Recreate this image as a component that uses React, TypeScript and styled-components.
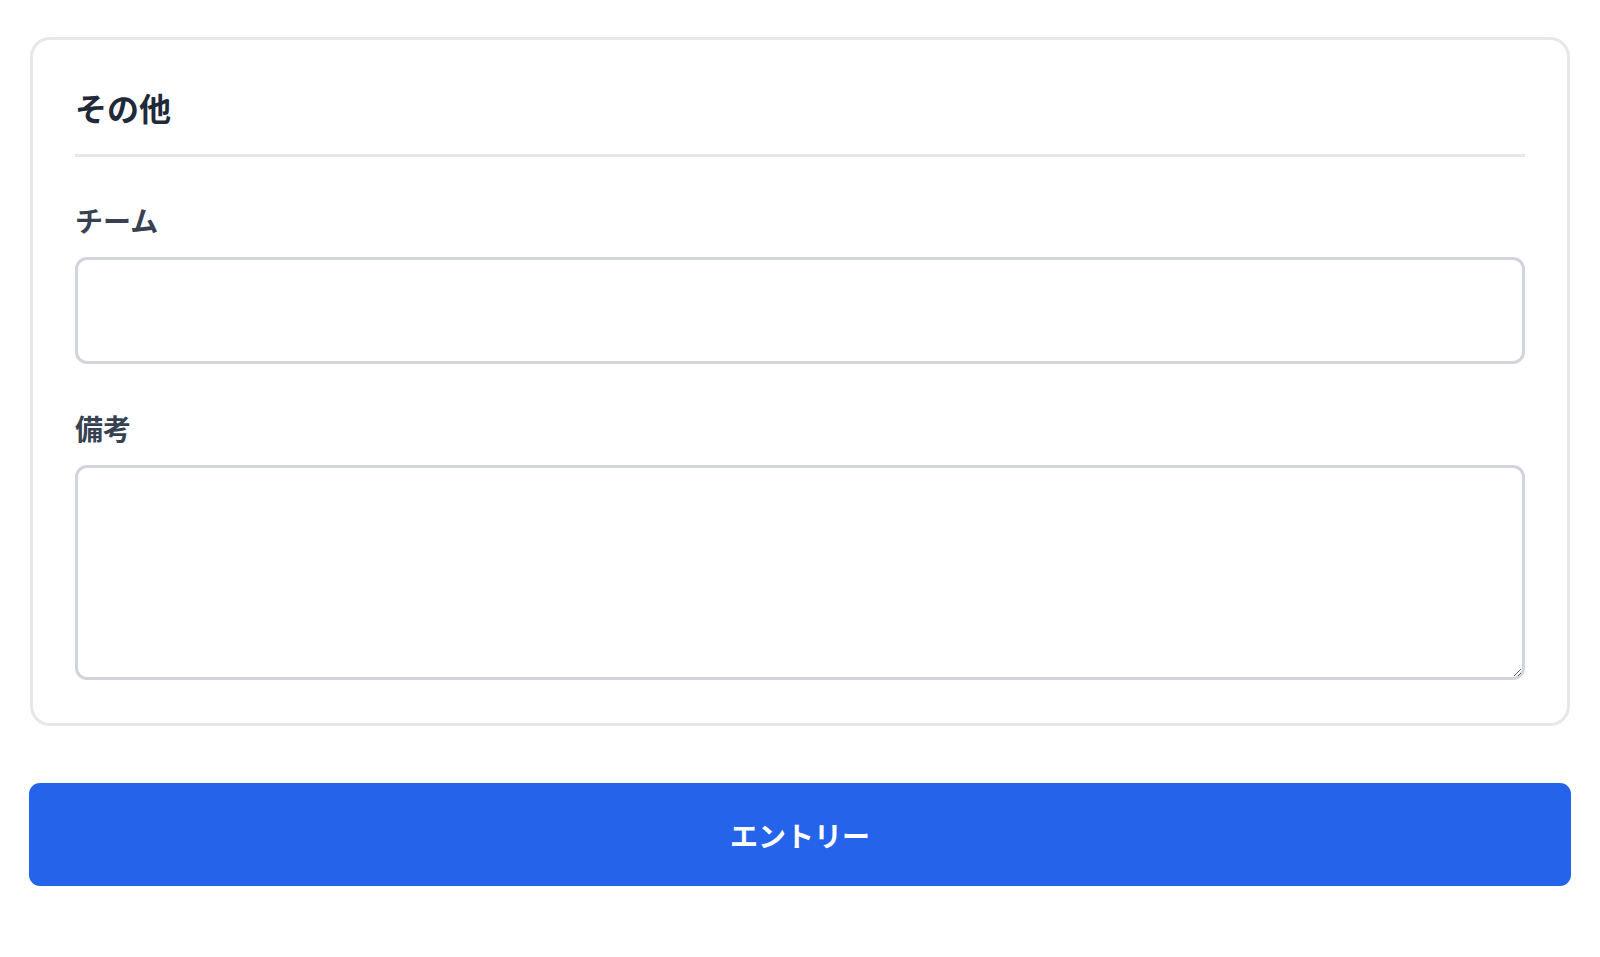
import React from "react";
import styled, { createGlobalStyle } from "styled-components";

const GlobalStyle = createGlobalStyle`
    body {
        margin: 0;
        background: #ffffff;
        font-family: "Noto Sans CJK JP", "Noto Sans", sans-serif;
    }
`;

const Page = styled.div`
    padding: 37px 30px 40px 30px;
    display: flex;
    flex-direction: column;
    gap: 57px;
`;

const Card = styled.section`
    border: 3px solid #e5e7eb;
    border-radius: 20px;
    padding: 44px 42px 43px 42px;
    background: #ffffff;
`;

const SectionTitle = styled.h2`
    margin: 0 0 43px 0;
    padding-bottom: 24px;
    border-bottom: 3px solid #e5e7eb;
    font-size: 32px;
    line-height: 46px;
    font-weight: 700;
    color: #1f2937;
`;

const Field = styled.div`
    display: flex;
    flex-direction: column;
    gap: 17px;
    & + & {
        margin-top: 44px;
    }
`;

const Label = styled.label`
    font-size: 28px;
    line-height: 40px;
    font-weight: 700;
    color: #374151;
`;

const TextInput = styled.input`
    box-sizing: border-box;
    width: 100%;
    height: 107px;
    border: 3px solid #d1d5db;
    border-radius: 12px;
    padding: 0 20px;
    font-size: 26px;
    font-family: inherit;
    outline: none;
`;

const TextArea = styled.textarea<{ $height: number }>`
    box-sizing: border-box;
    width: 100%;
    height: ${props => props.$height}px;
    border: 3px solid #d1d5db;
    border-radius: 12px;
    padding: 14px 20px;
    font-size: 26px;
    font-family: inherit;
    resize: vertical;
    outline: none;
    display: block;
`;

const SubmitButton = styled.button`
    height: 103px;
    margin: 0 -1px;
    border: none;
    border-radius: 11px;
    background: #2563eb;
    color: #ffffff;
    font-family: inherit;
    font-size: 28px;
    font-weight: 700;
    cursor: pointer;
`;

export default function App() {
    return (
        <>
            <GlobalStyle />
            <Page>
                <Card>
                    <SectionTitle>その他</SectionTitle>
                    <Field>
                        <Label htmlFor="team">チーム</Label>
                        <TextInput id="team" type="text" />
                    </Field>
                    <Field>
                        <Label htmlFor="note">備考</Label>
                        <TextArea id="note" $height={215} />
                    </Field>
                </Card>
                <SubmitButton type="button">エントリー</SubmitButton>
            </Page>
        </>
    );
}
